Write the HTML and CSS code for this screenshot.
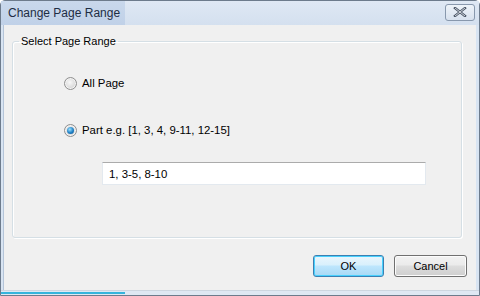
FILE: index.html
```html
<!DOCTYPE html>
<html lang="en">
<head>
    <meta charset="UTF-8">
    <title>Change Page Range</title>
    <link rel="stylesheet" href="styles.css">
</head>
<body>

    <div class="window">
        <div class="titlebar">
            <div class="title">Change Page Range</div>
            <button class="close">
                <svg width="14" height="10" viewBox="0 0 14 10">
                    <path d="M2 1 L12 9 M12 1 L2 9" stroke="#4a5566" stroke-width="2.4" stroke-linecap="square"/>
                    <path d="M2 1 L12 9 M12 1 L2 9" stroke="#f4f6f9" stroke-width="0.8"/>
                </svg>
            </button>
        </div>

        <div class="client">
            <fieldset class="group">
                <legend>Select Page Range</legend>

                <label class="option first">
                    <span class="radio"></span>
                    All Page
                </label>

                <label class="option second">
                    <span class="radio checked"></span>
                    Part e.g. [1, 3, 4, 9-11, 12-15]
                </label>

                <input type="text" class="range" value="1, 3-5, 8-10">
            </fieldset>

            <div class="actions">
                <button class="btn default">OK</button>
                <button class="btn">Cancel</button>
            </div>
        </div>

        <div class="bottom"><span class="progress"></span></div>
    </div>

</body>
</html>
```

FILE: styles.css
```css
* { margin: 0; padding: 0; box-sizing: border-box; }
body {
    font-family: "Liberation Sans", Arial, sans-serif;
    font-size: 11px;
    color: #000;
    background: #fff;
}
.window {
    width: 480px;
    height: 296px;
    border: 1px solid #6d7b8c;
    border-radius: 5px 5px 0 0;
    background: #d8e4f2;
    display: flex;
    flex-direction: column;
    padding: 0 3px 0 2px;
}
.titlebar {
    height: 24px;
    display: flex;
    align-items: center;
    justify-content: space-between;
    background: linear-gradient(#dfe8f4, #d4e0ef);
    margin: 0 -3px 0 -2px;
    padding-right: 4px;
}
.title {
    height: 24px;
    line-height: 24px;
    width: 124px;
    padding-left: 7px;
    white-space: nowrap;
    font-size: 12px;
    color: #1e2d44;
    background: linear-gradient(#c9d8ec, #c0d1e8);
}
.close {
    width: 30px;
    height: 17px;
    margin-top: -2px;
    border: 1px solid #8898ad;
    border-radius: 3px;
    background: linear-gradient(#eef3f9, #d7e1ee);
    display: flex;
    align-items: center;
    justify-content: center;
}
.client {
    flex: 1;
    background: #f0f0f0;
    border-left: 1px solid #b4c4d8;
    display: flex;
    flex-direction: column;
    padding: 10px 0 0 8px;
}
.group {
    width: 450px;
    height: 203px;
    border: 1px solid #d5dfe5;
    border-radius: 3px;
    box-shadow: 1px 1px 0 #fff inset, 1px 1px 0 #fff;
    display: flex;
    flex-direction: column;
    padding: 0 0 0 51px;
}
legend {
    margin-left: -45px;
    padding: 0 2px;
    font-size: 11px;
}
.option {
    display: flex;
    align-items: center;
    gap: 5px;
    height: 14px;
    font-size: 11.4px;
}
.first { margin-top: 29px; }
.second { margin-top: 33px; }
.radio {
    width: 13px;
    height: 13px;
    border-radius: 50%;
    border: 1px solid #8f8f8f;
    background: radial-gradient(circle at 45% 40%, #f8f8f8, #d6d6d6 70%);
    box-shadow: inset 0 0 0 1px #f4f4f4;
    display: flex;
    align-items: center;
    justify-content: center;
}
.checked::after {
    content: "";
    width: 7px;
    height: 7px;
    border-radius: 50%;
    background: radial-gradient(circle at 40% 35%, #9de2ff, #1f7fc4 55%, #0b4f8c);
}
.range {
    margin: 25px 0 0 38px;
    width: 324px;
    height: 23px;
    border: 1px solid #e3e9ef;
    border-top-color: #ababab;
    background: #fff;
    padding: 0 6px;
    font-family: "Liberation Sans", Arial, sans-serif;
    font-size: 11.4px;
    outline: none;
}
.actions {
    display: flex;
    gap: 10px;
    justify-content: flex-end;
    padding: 17px 9px 0 0;
}
.btn {
    width: 73px;
    height: 22px;
    border: 1px solid #707070;
    border-radius: 3px;
    background: linear-gradient(#f2f2f2 0%, #ebebeb 45%, #dddddd 50%, #cfcfcf 100%);
    box-shadow: inset 0 0 0 1px #fcfcfc;
    font-family: "Liberation Sans", Arial, sans-serif;
    font-size: 11px;
    color: #000;
}
.default {
    width: 71px;
    border-color: #3c7fb1;
    background: linear-gradient(#eaf6fd 0%, #d9f0fc 45%, #bee6fd 50%, #a7d9f5 100%);
    box-shadow: inset 0 0 0 1px #48d1fe;
}
.bottom {
    height: 5px;
    margin: 0 -3px 0 -2px;
    border-top: 1px solid #cdd6e0;
    background: #dfe8f3;
    padding-top: 1px;
}
.progress {
    display: block;
    width: 124px;
    height: 2px;
    background: #35b4dc;
}
```
